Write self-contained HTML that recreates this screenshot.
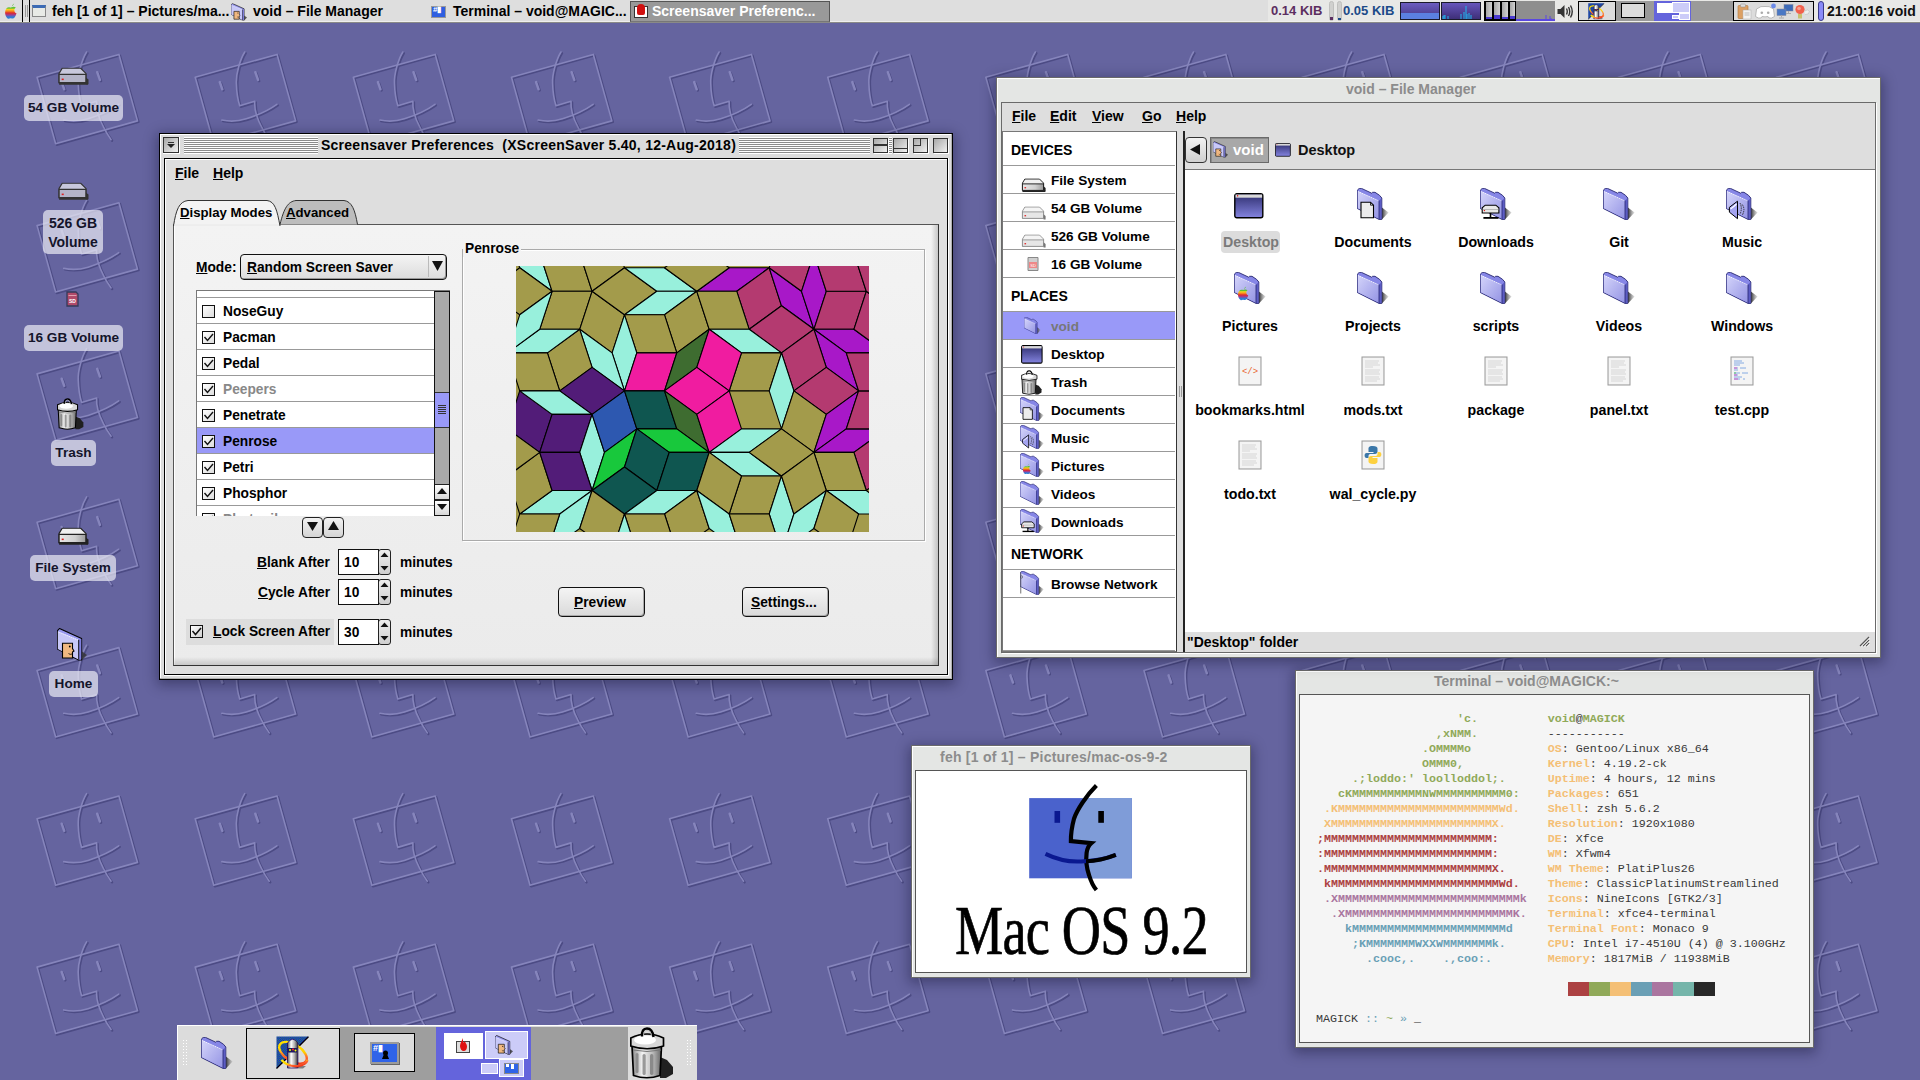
<!DOCTYPE html>
<html><head><meta charset="utf-8">
<style>
*{box-sizing:border-box;margin:0;padding:0}
html,body{width:1920px;height:1080px;overflow:hidden}
body{position:relative;background:#65649f;font-family:"Liberation Sans",sans-serif;font-size:13px;color:#000}
.a{position:absolute}
.b{font-weight:bold}
.t{white-space:nowrap}
#wall{position:absolute;left:0;top:0;width:1920px;height:1080px}
/* panel */
#panel{position:absolute;left:0;top:0;width:1920px;height:23px;background:linear-gradient(90deg,#dedede 0 1268px,#e8e8e6 1268px);border-bottom:1px solid #8a8a88;box-shadow:inset 0 -1px 0 #efefed}
#panel .tx{position:absolute;top:3px;font-size:14px;font-weight:bold;white-space:nowrap;line-height:16px}
/* desktop icons */
.dlab{position:absolute;background:rgba(235,235,245,0.72);border-radius:4px;font-weight:bold;font-size:13.5px;text-align:center;line-height:18px;color:#111}
/* window */
.win{position:absolute}
</style></head><body>
<svg id="wall" width="1920" height="1080">
<defs><g id="face"><g stroke="#4c4b84" stroke-width="2.2" transform="translate(0.9,0.9)"><g transform="rotate(-15.6)" fill="none" stroke-linecap="round" stroke-linejoin="round">
<rect x="0" y="0" width="85" height="69"/>
<path d="M54.5,-11 C48,-5 40,8 38,17 C36,25 35,33 35.2,39.5 L50.9,39.2 C48.5,46 48,54 50.6,66 C51.5,71 53,76 54.5,80"/>
<path d="M14.2,48.4 C22,52.5 30,54 38,53.8 C50,53.3 62,51.5 71.4,48"/>
<path d="M22.4,11.3 L22.9,18.9 M59.3,11.3 L59.8,19.5" stroke-width="2.5"/>
</g></g><g stroke="#8685bc" stroke-width="1.6" transform="translate(-0.2,-0.2)"><g transform="rotate(-15.6)" fill="none" stroke-linecap="round" stroke-linejoin="round">
<rect x="0" y="0" width="85" height="69"/>
<path d="M54.5,-11 C48,-5 40,8 38,17 C36,25 35,33 35.2,39.5 L50.9,39.2 C48.5,46 48,54 50.6,66 C51.5,71 53,76 54.5,80"/>
<path d="M14.2,48.4 C22,52.5 30,54 38,53.8 C50,53.3 62,51.5 71.4,48"/>
<path d="M22.4,11.3 L22.9,18.9 M59.3,11.3 L59.8,19.5" stroke-width="2.5"/>
</g></g></g></defs>
<use href="#face" x="-120.87" y="-70.85"/>
<use href="#face" x="37.26" y="-70.85"/>
<use href="#face" x="195.39" y="-70.85"/>
<use href="#face" x="353.52" y="-70.85"/>
<use href="#face" x="511.65" y="-70.85"/>
<use href="#face" x="669.78" y="-70.85"/>
<use href="#face" x="827.91" y="-70.85"/>
<use href="#face" x="986.04" y="-70.85"/>
<use href="#face" x="1144.17" y="-70.85"/>
<use href="#face" x="1302.30" y="-70.85"/>
<use href="#face" x="1460.43" y="-70.85"/>
<use href="#face" x="1618.56" y="-70.85"/>
<use href="#face" x="1776.69" y="-70.85"/>
<use href="#face" x="-120.87" y="77.46"/>
<use href="#face" x="37.26" y="77.46"/>
<use href="#face" x="195.39" y="77.46"/>
<use href="#face" x="353.52" y="77.46"/>
<use href="#face" x="511.65" y="77.46"/>
<use href="#face" x="669.78" y="77.46"/>
<use href="#face" x="827.91" y="77.46"/>
<use href="#face" x="986.04" y="77.46"/>
<use href="#face" x="1144.17" y="77.46"/>
<use href="#face" x="1302.30" y="77.46"/>
<use href="#face" x="1460.43" y="77.46"/>
<use href="#face" x="1618.56" y="77.46"/>
<use href="#face" x="1776.69" y="77.46"/>
<use href="#face" x="-120.87" y="225.77"/>
<use href="#face" x="37.26" y="225.77"/>
<use href="#face" x="195.39" y="225.77"/>
<use href="#face" x="353.52" y="225.77"/>
<use href="#face" x="511.65" y="225.77"/>
<use href="#face" x="669.78" y="225.77"/>
<use href="#face" x="827.91" y="225.77"/>
<use href="#face" x="986.04" y="225.77"/>
<use href="#face" x="1144.17" y="225.77"/>
<use href="#face" x="1302.30" y="225.77"/>
<use href="#face" x="1460.43" y="225.77"/>
<use href="#face" x="1618.56" y="225.77"/>
<use href="#face" x="1776.69" y="225.77"/>
<use href="#face" x="-120.87" y="374.08"/>
<use href="#face" x="37.26" y="374.08"/>
<use href="#face" x="195.39" y="374.08"/>
<use href="#face" x="353.52" y="374.08"/>
<use href="#face" x="511.65" y="374.08"/>
<use href="#face" x="669.78" y="374.08"/>
<use href="#face" x="827.91" y="374.08"/>
<use href="#face" x="986.04" y="374.08"/>
<use href="#face" x="1144.17" y="374.08"/>
<use href="#face" x="1302.30" y="374.08"/>
<use href="#face" x="1460.43" y="374.08"/>
<use href="#face" x="1618.56" y="374.08"/>
<use href="#face" x="1776.69" y="374.08"/>
<use href="#face" x="-120.87" y="522.39"/>
<use href="#face" x="37.26" y="522.39"/>
<use href="#face" x="195.39" y="522.39"/>
<use href="#face" x="353.52" y="522.39"/>
<use href="#face" x="511.65" y="522.39"/>
<use href="#face" x="669.78" y="522.39"/>
<use href="#face" x="827.91" y="522.39"/>
<use href="#face" x="986.04" y="522.39"/>
<use href="#face" x="1144.17" y="522.39"/>
<use href="#face" x="1302.30" y="522.39"/>
<use href="#face" x="1460.43" y="522.39"/>
<use href="#face" x="1618.56" y="522.39"/>
<use href="#face" x="1776.69" y="522.39"/>
<use href="#face" x="-120.87" y="670.70"/>
<use href="#face" x="37.26" y="670.70"/>
<use href="#face" x="195.39" y="670.70"/>
<use href="#face" x="353.52" y="670.70"/>
<use href="#face" x="511.65" y="670.70"/>
<use href="#face" x="669.78" y="670.70"/>
<use href="#face" x="827.91" y="670.70"/>
<use href="#face" x="986.04" y="670.70"/>
<use href="#face" x="1144.17" y="670.70"/>
<use href="#face" x="1302.30" y="670.70"/>
<use href="#face" x="1460.43" y="670.70"/>
<use href="#face" x="1618.56" y="670.70"/>
<use href="#face" x="1776.69" y="670.70"/>
<use href="#face" x="-120.87" y="819.01"/>
<use href="#face" x="37.26" y="819.01"/>
<use href="#face" x="195.39" y="819.01"/>
<use href="#face" x="353.52" y="819.01"/>
<use href="#face" x="511.65" y="819.01"/>
<use href="#face" x="669.78" y="819.01"/>
<use href="#face" x="827.91" y="819.01"/>
<use href="#face" x="986.04" y="819.01"/>
<use href="#face" x="1144.17" y="819.01"/>
<use href="#face" x="1302.30" y="819.01"/>
<use href="#face" x="1460.43" y="819.01"/>
<use href="#face" x="1618.56" y="819.01"/>
<use href="#face" x="1776.69" y="819.01"/>
<use href="#face" x="-120.87" y="967.32"/>
<use href="#face" x="37.26" y="967.32"/>
<use href="#face" x="195.39" y="967.32"/>
<use href="#face" x="353.52" y="967.32"/>
<use href="#face" x="511.65" y="967.32"/>
<use href="#face" x="669.78" y="967.32"/>
<use href="#face" x="827.91" y="967.32"/>
<use href="#face" x="986.04" y="967.32"/>
<use href="#face" x="1144.17" y="967.32"/>
<use href="#face" x="1302.30" y="967.32"/>
<use href="#face" x="1460.43" y="967.32"/>
<use href="#face" x="1618.56" y="967.32"/>
<use href="#face" x="1776.69" y="967.32"/>
</svg>

<svg width="0" height="0" style="position:absolute">
<defs>
 <linearGradient id="fgrad" x1="0" y1="0" x2="1" y2="1"><stop offset="0" stop-color="#d4d4fa"/><stop offset="1" stop-color="#9494e4"/></linearGradient>
 <linearGradient id="shg" x1="0" y1="0" x2="1" y2="0"><stop offset="0" stop-color="#333"/><stop offset="1" stop-color="#999" stop-opacity="0.3"/></linearGradient>
 <linearGradient id="dwin" x1="0" y1="0" x2="0" y2="1"><stop offset="0" stop-color="#2e2e6e"/><stop offset="1" stop-color="#8484e0"/></linearGradient>
 <linearGradient id="drv" x1="0" y1="0" x2="1" y2="0"><stop offset="0" stop-color="#e8e8e8"/><stop offset="0.6" stop-color="#d0d0d0"/><stop offset="1" stop-color="#9a9a9a"/></linearGradient>
 <linearGradient id="trg" x1="0" y1="0" x2="1" y2="0"><stop offset="0" stop-color="#888"/><stop offset="0.35" stop-color="#f4f4f4"/><stop offset="0.7" stop-color="#bbb"/><stop offset="1" stop-color="#666"/></linearGradient>
 <symbol id="folder" viewBox="0 0 32 32">
  <path d="M24.9,19.5 L31.6,24.4 L24.9,31.6Z" fill="url(#shg)"/>
  <path d="M0.3,2.2 L2.2,0.4 L4.5,0.4 L14.7,5.2 L15.6,4.3 L18,4.3 L22.5,7.3 L24.8,10 L24.8,31.4 L22,31.4 L0.3,20.5Z" fill="#8686e6" stroke="#24246e" stroke-width="0.9" stroke-linejoin="round"/>
  <path d="M0.9,3 L22,12.6 L22,30.8 L0.9,20.2Z" fill="url(#fgrad)"/>
  <path d="M22,12.6 L24.3,10.6 L24.3,30.9 L22,30.9Z" fill="#5c5cc4"/>
  <path d="M22,12.6 V31.2" stroke="#24246e" stroke-width="0.8"/>
  <path d="M1.3,3.6 L21.5,12.8" stroke="#fff" stroke-width="0.8" stroke-dasharray="1.1,0.9"/>
 </symbol>
 <symbol id="dwinico" viewBox="0 0 30 26">
  <rect x="0.8" y="0.8" width="28" height="24" rx="2" fill="url(#dwin)" stroke="#000" stroke-width="1.4"/>
  <rect x="1.5" y="1.5" width="26.6" height="3.2" fill="#d8d8d8"/>
  <rect x="3" y="2.2" width="1.2" height="1.2" fill="#d00"/>
 </symbol>
 <symbol id="drive" viewBox="0 0 32 18">
  <path d="M6,1 L24,1 L29,6 L29,15 L3,15 L3,6Z" fill="#f0f0f0" stroke="#222" stroke-width="1.2"/>
  <path d="M3,7 L29,7 L29,15 L3,15Z" fill="url(#drv)" stroke="#222" stroke-width="1.2"/>
  <path d="M29,10 L31.5,12 L31.5,16.5 L29,16.5Z" fill="#222"/>
  <rect x="3" y="15" width="28" height="2" fill="#222"/>
  <rect x="5.5" y="11" width="2" height="1.5" fill="#d22"/>
 </symbol>
 <symbol id="drivew" viewBox="0 0 32 18">
  <path d="M6,1 L24,1 L29,6 L29,15 L3,15 L3,6Z" fill="#f4f4f4" stroke="#888" stroke-width="1"/>
  <path d="M3,7 L29,7 L29,15 L3,15Z" fill="#e6e6e6" stroke="#888" stroke-width="1"/>
  <path d="M29,10 L31.5,12 L31.5,16.5 L29,16.5Z" fill="#777"/>
  <rect x="5.5" y="11" width="2" height="1.5" fill="#d22"/>
 </symbol>
 <symbol id="drived" viewBox="0 0 32 18">
  <path d="M6,1 L24,1 L29,6 L29,15 L3,15 L3,6Z" fill="#c8c8dc" stroke="#333" stroke-width="1.2"/>
  <path d="M3,7 L29,7 L29,15 L3,15Z" fill="#b4b4c8" stroke="#333" stroke-width="1.2"/>
  <path d="M29,10 L31.5,12 L31.5,16.5 L29,16.5Z" fill="#333"/>
  <rect x="3" y="15" width="28" height="2" fill="#333"/>
  <rect x="5.5" y="11" width="2" height="1.5" fill="#d22"/>
 </symbol>
 <symbol id="trash" viewBox="0 0 44 52">
  <path d="M30,30 L37,33 L43,40 L43,47 L36,51 L30,51Z" fill="#202020"/>
  <path d="M2,19 L31.5,19 L30,48.5 Q17,53 3.5,48.5Z" fill="url(#trg)" stroke="#000" stroke-width="1.7"/>
  <path d="M3,23 Q17,26 31,23" stroke="#777" stroke-width="1" fill="none"/>
  <rect x="5.5" y="26" width="3" height="20" rx="1.5" fill="#8c8c8c"/><rect x="12.5" y="27" width="3.2" height="21" rx="1.6" fill="#999"/><rect x="20" y="27" width="3.4" height="21" rx="1.7" fill="#8a8a8a"/>
  <path d="M0.8,11 Q17,3 33.5,11 L33.5,19 Q17,24.5 0.8,19Z" fill="#d8d8d8" stroke="#000" stroke-width="1.7"/>
  <ellipse cx="15" cy="13" rx="11" ry="4.5" fill="#fff"/>
  <path d="M12,9.5 Q11.5,1.5 17,1.5 Q22.5,1.5 23.5,10" stroke="#000" stroke-width="2.4" fill="none"/>
  <path d="M13.5,9 Q13.5,3.5 17,3.5 Q21,3.5 21.5,9" stroke="#bbb" stroke-width="1" fill="none"/>
 </symbol>
 <symbol id="txtdoc" viewBox="0 0 24 30">
  <rect x="1" y="1" width="22" height="28" fill="#eee" stroke="#999" stroke-width="1"/>
  <rect x="2" y="2" width="20" height="26" fill="#f4f4f4"/>
  <path d="M4,5H18M4,7H17M4,9H19M4,11H12M4,14H19M4,16H18M4,18H19M4,21H18M4,23H19M4,25H16" stroke="#c4c4c4" stroke-width="0.6"/>
 </symbol>
<symbol id="homef" viewBox="0 0 30 33">
  <path d="M24.6,23 L30,27 L24.6,32.5Z" fill="#333" opacity="0.8"/>
  <path d="M0.5,2.7 L2.5,0.5 L24.6,10.5 L24.6,32 L21.7,32 L0.5,21Z" fill="#9a9af0" stroke="#000" stroke-width="1.1" stroke-linejoin="round"/>
  <path d="M0.8,3.2 L21.7,11.8 L21.7,31.5 L0.8,21Z" fill="#c8c8f8"/>
  <path d="M21.7,11.8 L24.3,11 L24.3,31.5 L21.7,31.5Z" fill="#8080e0"/>
  <path d="M1.5,4 L21,12" stroke="#fff" stroke-width="0.9" stroke-dasharray="1.2,1"/>
  <path d="M21.7,11.8 V31.5" stroke="#000" stroke-width="0.9"/>
  <path d="M5.5,15.3 H15.5 V20.5 L17,23 L15.5,24 V30 H5.5Z" fill="#f0b880" stroke="#000" stroke-width="1.1"/>
  <circle cx="12.8" cy="18.5" r="0.9" fill="#000"/>
  <path d="M11.5,25.5 Q13,27 15,26" stroke="#000" stroke-width="0.8" fill="none"/>
 </symbol>
<symbol id="xss" viewBox="0 0 34 34">
  <defs><pattern id="dith" width="2" height="2" patternUnits="userSpaceOnUse"><rect width="2" height="2" fill="#1414e0"/><rect width="1" height="1" fill="#2a8a5a"/><rect x="1" y="1" width="1" height="1" fill="#2a8a5a"/></pattern>
  <linearGradient id="ringg" x1="0" y1="0" x2="1" y2="1"><stop offset="0" stop-color="#ffe800"/><stop offset="0.45" stop-color="#ffd000"/><stop offset="0.6" stop-color="#ff6a30"/><stop offset="1" stop-color="#e82010"/></linearGradient>
  <linearGradient id="cylg" x1="0" y1="0" x2="1" y2="0"><stop offset="0" stop-color="#555"/><stop offset="0.35" stop-color="#fff"/><stop offset="0.7" stop-color="#aaa"/><stop offset="1" stop-color="#333"/></linearGradient></defs>
  <path d="M0.5,0.5 H32.5 L0.5,32.5Z" fill="url(#dith)"/>
  <path d="M32.5,0.8 L0.5,32.5" stroke="#000" stroke-width="1.2"/>
  <path d="M22,30 H30 L27,32.5 H22Z" fill="#808080"/>
  <ellipse cx="17" cy="16.8" rx="15.5" ry="8.3" transform="rotate(33 17 16.8)" fill="none" stroke="url(#ringg)" stroke-width="2.4"/>
  <path d="M11.5,32 V7 Q16.7,-0.5 21.9,7 V32Z" fill="url(#cylg)" stroke="#220a60" stroke-width="0.8"/>
  <rect x="12" y="12" width="9" height="4.5" fill="#1a1a60"/><circle cx="14" cy="14" r="1" fill="#ff0"/><circle cx="17" cy="13.5" r="1.1" fill="#f22"/><circle cx="19.5" cy="14.5" r="1" fill="#ff0"/>
  <path d="M5.5,24 Q12,31 22,30 Q30,28.5 31.5,24" fill="none" stroke="url(#ringg)" stroke-width="2.4"/>
 </symbol>
</defs></svg>

<!-- DESK -->
<svg class="a" style="left:56px;top:67px" width="33" height="19" viewBox="0 0 32 18"><use href="#drived"/></svg>
<div class="a" style="left:24px;top:95px;width:99px;height:26px;background:rgba(232,232,242,0.72);border-radius:5px"></div>
<div class="a t b" style="left:24px;top:99px;width:99px;text-align:center;font-size:13.6px;line-height:18px;color:#14142a">54 GB Volume</div>
<svg class="a" style="left:56px;top:182px" width="33" height="19" viewBox="0 0 32 18"><use href="#drived"/></svg>
<div class="a" style="left:43px;top:210px;width:60px;height:44px;background:rgba(232,232,242,0.72);border-radius:5px"></div>
<div class="a b" style="left:43px;top:214px;width:60px;text-align:center;font-size:14px;line-height:18.5px;color:#14142a">526 GB<br>Volume</div>
<svg class="a" style="left:66px;top:291px" width="13" height="16" viewBox="0 0 13 16"><path d="M1,1H10L12,3V15H1Z" fill="#b04a6a" stroke="#333a5a" stroke-width="1.3"/><rect x="2.5" y="4" width="8" height="1" fill="#e0a0b0"/><text x="6.5" y="12" font-size="5" text-anchor="middle" fill="#fff" font-family="Liberation Sans" font-weight="bold">SD</text></svg>
<div class="a" style="left:24px;top:325px;width:99px;height:26px;background:rgba(232,232,242,0.72);border-radius:5px"></div>
<div class="a t b" style="left:24px;top:329px;width:99px;text-align:center;font-size:13.6px;line-height:18px;color:#14142a">16 GB Volume</div>
<svg class="a" style="left:57px;top:398px" width="27" height="32" viewBox="0 0 44 52"><use href="#trash"/></svg>
<div class="a" style="left:51px;top:440px;width:45px;height:26px;background:rgba(232,232,242,0.72);border-radius:5px"></div>
<div class="a t b" style="left:51px;top:444px;width:45px;text-align:center;font-size:13.6px;line-height:18px;color:#14142a">Trash</div>
<svg class="a" style="left:56px;top:527px" width="33" height="19" viewBox="0 0 32 18"><use href="#drive"/></svg>
<div class="a" style="left:30px;top:555px;width:86px;height:26px;background:rgba(232,232,242,0.72);border-radius:5px"></div>
<div class="a t b" style="left:30px;top:559px;width:86px;text-align:center;font-size:13.6px;line-height:18px;color:#14142a">File System</div>
<svg class="a" style="left:57px;top:628px" width="30" height="33" viewBox="0 0 30 33"><use href="#homef"/></svg>
<div class="a" style="left:49px;top:671px;width:49px;height:26px;background:rgba(232,232,242,0.72);border-radius:5px"></div>
<div class="a t b" style="left:49px;top:675px;width:49px;text-align:center;font-size:13.6px;line-height:18px;color:#14142a">Home</div>
<div class="a" style="left:177px;top:1025px;width:520px;height:55px;background:#dcdcdc;border-top:1px solid #fff;border-left:1px solid #fff"></div>
<div class="a" style="left:182px;top:1039px;width:6px;height:26px;background:radial-gradient(circle,#fff 0.8px,transparent 1px) 0 0/3px 3px"></div>
<div class="a" style="left:686px;top:1039px;width:6px;height:26px;background:radial-gradient(circle,#fff 0.8px,transparent 1px) 0 0/3px 3px"></div>
<svg class="a" style="left:201px;top:1037px" width="32" height="32" viewBox="0 0 32 32"><use href="#folder"/></svg>
<div class="a" style="left:246px;top:1028px;width:94px;height:51px;border:1.5px solid #000;background:#dcdcdc"></div>
<svg class="a" style="left:276px;top:1036px" width="34" height="34" viewBox="0 0 34 34"><use href="#xss"/></svg>
<div class="a" style="left:340px;top:1027px;width:96px;height:53px;background:#9e9e9e"></div>
<div class="a" style="left:354px;top:1033px;width:61px;height:39px;border:1.5px solid #000;background:#dcdcdc"></div>
<div class="a" style="left:370px;top:1042px;width:29px;height:22px;background:#2f63e8;border:2px solid #9a9a9a;box-shadow:1px 1px 0 #666"></div>
<div class="a t b" style="left:373px;top:1043px;font-size:9px;line-height:10px;color:#fff">#▮</div>
<svg class="a" style="left:381px;top:1050px" width="9" height="10"><circle cx="4.5" cy="3" r="2.5" fill="#000"/><path d="M3,4 L1,9 H8 L6,4Z" fill="#000"/></svg>
<div class="a" style="left:436px;top:1027px;width:95px;height:53px;background:#6464dc"></div>
<div class="a" style="left:444px;top:1033px;width:39px;height:26px;background:#fff"></div>
<div class="a" style="left:456px;top:1041px;width:14px;height:12px;background:#ddd;border:1px solid #444"></div>
<svg class="a" style="left:457px;top:1037px" width="12" height="16"><path d="M6,1 C5,4 3,6 3,9 C3,12 5,14 6.5,14 C9,14 10,12 10,9.5 C10,7 8,6 8,4 C7,5 7,6 6,5 C6,3 6,2 6,1Z" fill="#e01010"/></svg>
<div class="a" style="left:485px;top:1031px;width:43px;height:28px;background:#ccccf8;border:1px solid #fff"></div>
<svg class="a" style="left:495px;top:1035px" width="18" height="20" viewBox="0 0 30 33"><use href="#homef"/></svg>
<div class="a" style="left:481px;top:1063px;width:17px;height:11px;background:#ccccf8;border:1px solid #fff"></div>
<div class="a" style="left:499px;top:1059px;width:25px;height:18px;background:#ccccf8;border:1px solid #fff"></div>
<div class="a" style="left:504px;top:1063px;width:15px;height:11px;background:#2f63e8;border:1px solid #888"></div><div class="a" style="left:506px;top:1064px;width:3px;height:3px;background:#fff"></div><div class="a" style="left:511px;top:1064px;width:3px;height:5px;background:#fff"></div>
<div class="a" style="left:531px;top:1027px;width:97px;height:53px;background:#9e9e9e"></div>
<svg class="a" style="left:630px;top:1027px" width="44" height="52" viewBox="0 0 44 52"><use href="#trash"/></svg>
<!-- FEH/TERM -->
<div class="a" style="left:911px;top:745px;width:340px;height:233px;box-shadow:0 3px 12px 2px rgba(10,10,40,0.38)"></div>
<div class="a" style="left:911px;top:745px;width:340px;height:233px;background:#e4e6e4;border:1px solid #6a6a6a"></div>
<div class="a" style="left:912px;top:746px;width:338px;height:1px;background:#fff"></div>
<div class="a" style="left:912px;top:746px;width:1px;height:231px;background:#fff"></div>
<div class="a t b" style="left:940px;top:749px;font-size:14px;line-height:17px;color:#8c8c8c;letter-spacing:0.24px">feh [1 of 1] – Pictures/mac-os-9-2</div>
<div class="a" style="left:915px;top:770px;width:332px;height:203px;background:#fff;border:1px solid #555"></div>
<svg class="a" style="left:1020px;top:780px" width="120" height="112" viewBox="0 0 120 112">
 <defs><clipPath id="frc"><rect x="9.2" y="18.1" width="102.6" height="80.2"/></clipPath></defs>
 <rect x="9.2" y="18.1" width="102.6" height="80.2" fill="#4a62cc"/>
 <path clip-path="url(#frc)" d="M76.4,5.6 H120 V112 H76.4 C73,106 70.5,100 69,95 C66.6,88 65.8,80 66.6,73 C67,70 68,66 71.3,63.2 L50.9,61.1 C50.8,55 51.5,48 54,38.7 C57,30 66,16 76.4,5.6Z" fill="#7f9cd8"/>
 <path d="M76.4,5.6 C66,16 57,30 54,38.7 C51.5,48 50.8,55 50.9,61.1 L71.3,63.2 C68,66 67,70 66.6,73 C65.8,80 66.6,88 69,95 C70.5,100 73,106 76.4,110" fill="none" stroke="#000" stroke-width="4.2"/>
 <rect x="34.5" y="31" width="5.6" height="11.8" fill="#0a1890"/>
 <rect x="78.3" y="31" width="5.6" height="11.8" fill="#000"/>
 <path d="M25.5,73.9 C38,80 52,82 61.1,81.5 C75,81 88,78 95.8,74.9" fill="none" stroke="#0a1890" stroke-width="4"/>
 <path d="M66,81.2 C75,81 88,78 95.8,74.9" fill="none" stroke="#000" stroke-width="4"/>
</svg>
<div class="a t" style="left:955px;top:896px;font-family:'Liberation Serif',serif;font-size:70px;line-height:70px;color:#000;transform-origin:0 0;transform:scaleX(0.775);letter-spacing:-1px;-webkit-text-stroke:0.7px #000">Mac OS 9.2</div>
<div class="a" style="left:1295px;top:670px;width:519px;height:378px;box-shadow:0 3px 12px 2px rgba(10,10,40,0.38)"></div>
<div class="a" style="left:1295px;top:670px;width:519px;height:378px;background:#e4e6e4;border:1px solid #6a6a6a"></div>
<div class="a" style="left:1296px;top:671px;width:517px;height:1px;background:#fff"></div>
<div class="a" style="left:1296px;top:671px;width:1px;height:376px;background:#fff"></div>
<div class="a t b" style="left:1434px;top:673px;font-size:14px;line-height:17px;color:#8c8c8c">Terminal – void@MAGICK:~</div>
<div class="a" style="left:1299px;top:694px;width:511px;height:349px;background:#f5f5f5;border:1px solid #555"></div>
<div class="a" style="left:1317px;top:712px;font-family:'Liberation Mono',monospace;font-size:11.67px;line-height:15px;white-space:pre"><span style="font-weight:bold;color:#90a959">                    'c.</span>          <span style="font-weight:bold;color:#90a959">void</span><span style="color:#383838">@</span><span style="font-weight:bold;color:#90a959">MAGICK</span>
<span style="font-weight:bold;color:#90a959">                 ,xNMM.</span>          <span style="color:#383838">-----------</span>
<span style="font-weight:bold;color:#90a959">               .OMMMMo</span>           <span style="font-weight:bold;color:#f4bf75">OS</span><span style="color:#383838">: Gentoo/Linux x86_64</span>
<span style="font-weight:bold;color:#90a959">               OMMM0,</span>            <span style="font-weight:bold;color:#f4bf75">Kernel</span><span style="color:#383838">: 4.19.2-ck</span>
<span style="font-weight:bold;color:#90a959">     .;loddo:' loolloddol;.</span>      <span style="font-weight:bold;color:#f4bf75">Uptime</span><span style="color:#383838">: 4 hours, 12 mins</span>
<span style="font-weight:bold;color:#90a959">   cKMMMMMMMMMMNWMMMMMMMMMM0:</span>    <span style="font-weight:bold;color:#f4bf75">Packages</span><span style="color:#383838">: 651</span>
<span style="font-weight:bold;color:#f4bf75"> .KMMMMMMMMMMMMMMMMMMMMMMMWd.</span>    <span style="font-weight:bold;color:#f4bf75">Shell</span><span style="color:#383838">: zsh 5.6.2</span>
<span style="font-weight:bold;color:#f4bf75"> XMMMMMMMMMMMMMMMMMMMMMMMX.</span>      <span style="font-weight:bold;color:#f4bf75">Resolution</span><span style="color:#383838">: 1920x1080</span>
<span style="font-weight:bold;color:#ac4142">;MMMMMMMMMMMMMMMMMMMMMMMM:</span>       <span style="font-weight:bold;color:#f4bf75">DE</span><span style="color:#383838">: Xfce</span>
<span style="font-weight:bold;color:#ac4142">:MMMMMMMMMMMMMMMMMMMMMMMM:</span>       <span style="font-weight:bold;color:#f4bf75">WM</span><span style="color:#383838">: Xfwm4</span>
<span style="font-weight:bold;color:#ac4142">.MMMMMMMMMMMMMMMMMMMMMMMMX.</span>      <span style="font-weight:bold;color:#f4bf75">WM Theme</span><span style="color:#383838">: PlatiPlus26</span>
<span style="font-weight:bold;color:#ac4142"> kMMMMMMMMMMMMMMMMMMMMMMMMWd.</span>    <span style="font-weight:bold;color:#f4bf75">Theme</span><span style="color:#383838">: ClassicPlatinumStreamlined</span>
<span style="font-weight:bold;color:#aa759f"> .XMMMMMMMMMMMMMMMMMMMMMMMMMMk</span>   <span style="font-weight:bold;color:#f4bf75">Icons</span><span style="color:#383838">: NineIcons [GTK2/3]</span>
<span style="font-weight:bold;color:#aa759f">  .XMMMMMMMMMMMMMMMMMMMMMMMMK.</span>   <span style="font-weight:bold;color:#f4bf75">Terminal</span><span style="color:#383838">: xfce4-terminal</span>
<span style="font-weight:bold;color:#6a9fb5">    kMMMMMMMMMMMMMMMMMMMMMMd</span>     <span style="font-weight:bold;color:#f4bf75">Terminal Font</span><span style="color:#383838">: Monaco 9</span>
<span style="font-weight:bold;color:#6a9fb5">     ;KMMMMMMMWXXWMMMMMMMk.</span>      <span style="font-weight:bold;color:#f4bf75">CPU</span><span style="color:#383838">: Intel i7-4510U (4) @ 3.100GHz</span>
<span style="font-weight:bold;color:#6a9fb5">       .cooc,.    .,coo:.</span>        <span style="font-weight:bold;color:#f4bf75">Memory</span><span style="color:#383838">: 1817MiB / 11938MiB</span>
</div>
<div class="a" style="left:1568px;top:982px;width:21px;height:14px;background:#ac4142"></div>
<div class="a" style="left:1589px;top:982px;width:21px;height:14px;background:#90a959"></div>
<div class="a" style="left:1610px;top:982px;width:21px;height:14px;background:#f4bf75"></div>
<div class="a" style="left:1631px;top:982px;width:21px;height:14px;background:#6a9fb5"></div>
<div class="a" style="left:1652px;top:982px;width:21px;height:14px;background:#aa759f"></div>
<div class="a" style="left:1673px;top:982px;width:21px;height:14px;background:#75b5aa"></div>
<div class="a" style="left:1694px;top:982px;width:21px;height:14px;background:#282828"></div>
<div class="a t" style="left:1316px;top:1012px;font-family:'Liberation Mono',monospace;font-size:11.67px;line-height:15px;white-space:pre;color:#383838">MAGICK <span style="color:#6a9fb5">::</span> <span style="color:#90a959">~</span> <span style="color:#6a9fb5">»</span> _</div>
<!-- FM -->
<div class="a" style="left:996px;top:77px;width:885px;height:581px;box-shadow:0 3px 12px 2px rgba(10,10,40,0.38)"></div>
<div class="a" style="left:996px;top:77px;width:885px;height:581px;background:#e4e6e4;border:1px solid #6a6a6a"></div>
<div class="a" style="left:997px;top:78px;width:883px;height:1px;background:#fff"></div>
<div class="a" style="left:997px;top:78px;width:1px;height:579px;background:#fff"></div>
<div class="a t b" style="left:1346px;top:81px;font-size:14px;line-height:17px;color:#8c8c8c">void – File Manager</div>
<div class="a" style="left:1001px;top:102px;width:875px;height:551px;background:#dedede;border:1px solid #6a6a6a"></div>
<div class="a" style="left:1876px;top:103px;width:1px;height:551px;background:#fff"></div>
<div class="a" style="left:1002px;top:653px;width:875px;height:1px;background:#fff"></div>
<div class="a t b" style="left:1012px;top:108px;font-size:14px;line-height:17px"><u>F</u>ile</div>
<div class="a t b" style="left:1050px;top:108px;font-size:14px;line-height:17px"><u>E</u>dit</div>
<div class="a t b" style="left:1092px;top:108px;font-size:14px;line-height:17px"><u>V</u>iew</div>
<div class="a t b" style="left:1142px;top:108px;font-size:14px;line-height:17px"><u>G</u>o</div>
<div class="a t b" style="left:1176px;top:108px;font-size:14px;line-height:17px"><u>H</u>elp</div>
<div class="a" style="left:1002px;top:131px;width:175px;height:521px;background:#fff;border:1px solid #777;border-right:1px solid #333"></div>
<div class="a" style="left:1003px;top:311px;width:172px;height:28px;background:#9999f8"></div>
<div class="a" style="left:1003px;top:165px;width:172px;height:1px;background:#999"></div>
<div class="a" style="left:1003px;top:193px;width:172px;height:1px;background:#999"></div>
<div class="a" style="left:1003px;top:221px;width:172px;height:1px;background:#999"></div>
<div class="a" style="left:1003px;top:249px;width:172px;height:1px;background:#999"></div>
<div class="a" style="left:1003px;top:277px;width:172px;height:1px;background:#999"></div>
<div class="a" style="left:1003px;top:311px;width:172px;height:1px;background:#999"></div>
<div class="a" style="left:1003px;top:339px;width:172px;height:1px;background:#999"></div>
<div class="a" style="left:1003px;top:367px;width:172px;height:1px;background:#999"></div>
<div class="a" style="left:1003px;top:395px;width:172px;height:1px;background:#999"></div>
<div class="a" style="left:1003px;top:423px;width:172px;height:1px;background:#999"></div>
<div class="a" style="left:1003px;top:451px;width:172px;height:1px;background:#999"></div>
<div class="a" style="left:1003px;top:479px;width:172px;height:1px;background:#999"></div>
<div class="a" style="left:1003px;top:507px;width:172px;height:1px;background:#999"></div>
<div class="a" style="left:1003px;top:535px;width:172px;height:1px;background:#999"></div>
<div class="a" style="left:1003px;top:569px;width:172px;height:1px;background:#999"></div>
<div class="a" style="left:1003px;top:597px;width:172px;height:1px;background:#999"></div>
<div class="a" style="left:1003px;top:650px;width:172px;height:1px;background:#999"></div>
<div class="a t b" style="left:1011px;top:142px;font-size:14px;line-height:16px">DEVICES</div>
<div class="a t b" style="left:1011px;top:288px;font-size:14px;line-height:16px">PLACES</div>
<div class="a t b" style="left:1011px;top:546px;font-size:14px;line-height:16px">NETWORK</div>
<div class="a t b" style="left:1051px;top:173px;font-size:13.6px;line-height:16px;color:#000">File System</div>
<svg class="a" style="left:1020px;top:178px" width="26" height="15" viewBox="0 0 32 18"><use href="#drive"/></svg>
<div class="a t b" style="left:1051px;top:201px;font-size:13.6px;line-height:16px;color:#000">54 GB Volume</div>
<svg class="a" style="left:1020px;top:206px" width="26" height="15" viewBox="0 0 32 18"><use href="#drivew"/></svg>
<div class="a t b" style="left:1051px;top:229px;font-size:13.6px;line-height:16px;color:#000">526 GB Volume</div>
<svg class="a" style="left:1020px;top:234px" width="26" height="15" viewBox="0 0 32 18"><use href="#drivew"/></svg>
<div class="a t b" style="left:1051px;top:257px;font-size:13.6px;line-height:16px;color:#000">16 GB Volume</div>
<svg class="a" style="left:1027px;top:257px" width="12" height="14" viewBox="0 0 12 14"><path d="M1,0.5H11V13.5H1Z" fill="#cfcfcf" stroke="#888"/><rect x="2" y="5" width="8" height="6" fill="#e88"/><text x="6" y="10" font-size="4" text-anchor="middle" fill="#fff" font-family="Liberation Sans">SD</text></svg>
<div class="a t b" style="left:1051px;top:319px;font-size:13.6px;line-height:16px;color:#777">void</div>
<svg class="a" style="left:1024px;top:317px" width="17" height="17" viewBox="0 0 32 32"><use href="#folder"/></svg>
<div class="a t b" style="left:1051px;top:347px;font-size:13.6px;line-height:16px;color:#000">Desktop</div>
<svg class="a" style="left:1021px;top:345px" width="22" height="19" viewBox="0 0 30 26"><use href="#dwinico"/></svg>
<div class="a t b" style="left:1051px;top:375px;font-size:13.6px;line-height:16px;color:#000">Trash</div>
<svg class="a" style="left:1021px;top:370px" width="21" height="25" viewBox="0 0 44 52"><use href="#trash"/></svg>
<div class="a t b" style="left:1051px;top:403px;font-size:13.6px;line-height:16px;color:#000">Documents</div>
<svg class="a" style="left:1020px;top:397px" width="24" height="24" viewBox="0 0 32 32"><use href="#folder"/><path d="M4,14.2 H13.5 L16.5,17.2 V29.8 H4Z" fill="#ececec" stroke="#000" stroke-width="1.1"/><path d="M13.5,14.2 V17.2 H16.5" fill="none" stroke="#000" stroke-width="0.8"/></svg>
<div class="a t b" style="left:1051px;top:431px;font-size:13.6px;line-height:16px;color:#000">Music</div>
<svg class="a" style="left:1020px;top:425px" width="24" height="24" viewBox="0 0 32 32"><use href="#folder"/><path d="M11.5,13.2 L3.4,19.3 L3.4,24.2 L11.5,30.7Z" fill="#a4a4f0" stroke="#000" stroke-width="1"/><path d="M4.5,21 Q8,18.5 10.5,16" stroke="#fff" stroke-width="1.2" fill="none"/><path d="M14,15 Q16.5,20 14.2,25.8 M16.2,16.5 Q19.5,21 16.4,27" fill="none" stroke="#222" stroke-width="0.9" stroke-dasharray="1.5,0.8"/></svg>
<div class="a t b" style="left:1051px;top:459px;font-size:13.6px;line-height:16px;color:#000">Pictures</div>
<svg class="a" style="left:1020px;top:453px" width="24" height="24" viewBox="0 0 32 32"><use href="#folder"/><g transform="translate(3,14) scale(0.9)"><path d="M10.3,0.6 C9.6,1.8 9,2.6 7.8,3.4 C8.3,2.2 9,1.2 10.3,0.6Z M7.6,4.3 C9,3.6 10.6,3.6 11.8,4.6 C10.6,5.4 10.2,6.4 10.4,7.8 C10.6,9.2 11.4,9.9 12.5,10.3 C12,12.2 10.6,15.4 9,15.6 C8,15.7 7.6,15.1 6.6,15.2 C5.6,15.3 5.2,15.9 4.3,15.7 C2.7,15.3 1,12.3 1.1,9.3 C1.2,6 3.2,4.1 5.2,4.2 C6.3,4.2 6.8,4.7 7.6,4.3Z" fill="url(#appleg)"/></g></svg>
<div class="a t b" style="left:1051px;top:487px;font-size:13.6px;line-height:16px;color:#000">Videos</div>
<svg class="a" style="left:1020px;top:481px" width="24" height="24" viewBox="0 0 32 32"><use href="#folder"/></svg>
<div class="a t b" style="left:1051px;top:515px;font-size:13.6px;line-height:16px;color:#000">Downloads</div>
<svg class="a" style="left:1020px;top:509px" width="24" height="24" viewBox="0 0 32 32"><use href="#folder"/><path d="M5.2,17.2 H15.8 L18.9,19.8 V25 H2.2 V19.8Z" fill="#e8e8e8" stroke="#000" stroke-width="1.1"/><path d="M2.7,21.5 H18.4" stroke="#aaa" stroke-width="0.8"/><circle cx="4.4" cy="22.6" r="0.7" fill="#e00"/><path d="M10.5,25 V29.5" stroke="#000" stroke-width="1.6"/><path d="M3.4,29.9 H18.5" stroke="#000" stroke-width="1.8"/></svg>
<div class="a t b" style="left:1051px;top:577px;font-size:13.6px;line-height:16px;color:#000">Browse Network</div>
<svg class="a" style="left:1020px;top:571px" width="24" height="24" viewBox="0 0 32 32"><use href="#folder"/><path d="M1,2 V30" stroke="#444" stroke-width="1"/><circle cx="2" cy="8" r="1.6" fill="none" stroke="#444" stroke-width="0.7"/></svg>
<div class="a" style="left:1177px;top:131px;width:6px;height:521px;background:#dedede"></div>
<div class="a" style="left:1179px;top:386px;width:1px;height:11px;background:#999"></div>
<div class="a" style="left:1181px;top:386px;width:1px;height:11px;background:#999"></div>
<div class="a" style="left:1183px;top:131px;width:2px;height:521px;background:#222"></div>
<div class="a" style="left:1185px;top:169px;width:690px;height:463px;background:#fff;border-top:1px solid #777"></div>
<div class="a" style="left:1185px;top:137px;width:22px;height:26px;border:1px solid #333;border-radius:4px;background:linear-gradient(#f2f2f2,#d0d0d0)"></div>
<svg class="a" style="left:1190px;top:144px" width="11" height="12"><path d="M10,0 V11 L0,5.5Z" fill="#111"/></svg>
<div class="a" style="left:1210px;top:137px;width:59px;height:26px;border:1px solid #6a6a6a;background:#a8a8a8;box-shadow:inset 1px 1px 0 #8a8a8a"></div>
<svg class="a" style="left:1213px;top:141px" width="15" height="17" viewBox="0 0 30 33"><use href="#homef"/></svg>
<div class="a t b" style="left:1233px;top:141px;font-size:15px;line-height:18px;color:#fff">void</div>
<svg class="a" style="left:1275px;top:143px" width="16" height="14" viewBox="0 0 30 26"><use href="#dwinico"/></svg>
<div class="a t b" style="left:1298px;top:141px;font-size:14.5px;line-height:18px;color:#111">Desktop</div>
<div class="a" style="left:1221px;top:231px;width:59px;height:22px;background:#dcdcdc;border-radius:4px"></div>
<div class="a t b" style="left:1223px;top:234px;width:55px;text-align:center;font-size:14.2px;line-height:17px;color:#7a7a7a">Desktop</div>
<svg class="a" style="left:1234px;top:193px" width="30" height="26" viewBox="0 0 30 26"><use href="#dwinico"/></svg>
<div class="a t b" style="left:1293px;top:234px;width:160px;text-align:center;font-size:14.2px;line-height:17px">Documents</div>
<svg class="a" style="left:1357px;top:188px" width="32" height="32" viewBox="0 0 32 32"><use href="#folder"/><path d="M4,14.2 H13.5 L16.5,17.2 V29.8 H4Z" fill="#ececec" stroke="#000" stroke-width="1.1"/><path d="M13.5,14.2 V17.2 H16.5" fill="none" stroke="#000" stroke-width="0.8"/></svg>
<div class="a t b" style="left:1416px;top:234px;width:160px;text-align:center;font-size:14.2px;line-height:17px">Downloads</div>
<svg class="a" style="left:1480px;top:188px" width="32" height="32" viewBox="0 0 32 32"><use href="#folder"/><path d="M5.2,17.2 H15.8 L18.9,19.8 V25 H2.2 V19.8Z" fill="#e8e8e8" stroke="#000" stroke-width="1.1"/><path d="M2.7,21.5 H18.4" stroke="#aaa" stroke-width="0.8"/><circle cx="4.4" cy="22.6" r="0.7" fill="#e00"/><path d="M10.5,25 V29.5" stroke="#000" stroke-width="1.6"/><path d="M3.4,29.9 H18.5" stroke="#000" stroke-width="1.8"/></svg>
<div class="a t b" style="left:1539px;top:234px;width:160px;text-align:center;font-size:14.2px;line-height:17px">Git</div>
<svg class="a" style="left:1603px;top:188px" width="32" height="32" viewBox="0 0 32 32"><use href="#folder"/></svg>
<div class="a t b" style="left:1662px;top:234px;width:160px;text-align:center;font-size:14.2px;line-height:17px">Music</div>
<svg class="a" style="left:1726px;top:188px" width="32" height="32" viewBox="0 0 32 32"><use href="#folder"/><path d="M11.5,13.2 L3.4,19.3 L3.4,24.2 L11.5,30.7Z" fill="#a4a4f0" stroke="#000" stroke-width="1"/><path d="M4.5,21 Q8,18.5 10.5,16" stroke="#fff" stroke-width="1.2" fill="none"/><path d="M14,15 Q16.5,20 14.2,25.8 M16.2,16.5 Q19.5,21 16.4,27" fill="none" stroke="#222" stroke-width="0.9" stroke-dasharray="1.5,0.8"/></svg>
<div class="a t b" style="left:1170px;top:318px;width:160px;text-align:center;font-size:14.2px;line-height:17px">Pictures</div>
<svg class="a" style="left:1234px;top:272px" width="32" height="32" viewBox="0 0 32 32"><use href="#folder"/><g transform="translate(3,14) scale(0.9)"><path d="M10.3,0.6 C9.6,1.8 9,2.6 7.8,3.4 C8.3,2.2 9,1.2 10.3,0.6Z M7.6,4.3 C9,3.6 10.6,3.6 11.8,4.6 C10.6,5.4 10.2,6.4 10.4,7.8 C10.6,9.2 11.4,9.9 12.5,10.3 C12,12.2 10.6,15.4 9,15.6 C8,15.7 7.6,15.1 6.6,15.2 C5.6,15.3 5.2,15.9 4.3,15.7 C2.7,15.3 1,12.3 1.1,9.3 C1.2,6 3.2,4.1 5.2,4.2 C6.3,4.2 6.8,4.7 7.6,4.3Z" fill="url(#appleg)"/></g></svg>
<div class="a t b" style="left:1293px;top:318px;width:160px;text-align:center;font-size:14.2px;line-height:17px">Projects</div>
<svg class="a" style="left:1357px;top:272px" width="32" height="32" viewBox="0 0 32 32"><use href="#folder"/></svg>
<div class="a t b" style="left:1416px;top:318px;width:160px;text-align:center;font-size:14.2px;line-height:17px">scripts</div>
<svg class="a" style="left:1480px;top:272px" width="32" height="32" viewBox="0 0 32 32"><use href="#folder"/></svg>
<div class="a t b" style="left:1539px;top:318px;width:160px;text-align:center;font-size:14.2px;line-height:17px">Videos</div>
<svg class="a" style="left:1603px;top:272px" width="32" height="32" viewBox="0 0 32 32"><use href="#folder"/></svg>
<div class="a t b" style="left:1662px;top:318px;width:160px;text-align:center;font-size:14.2px;line-height:17px">Windows</div>
<svg class="a" style="left:1726px;top:272px" width="32" height="32" viewBox="0 0 32 32"><use href="#folder"/></svg>
<div class="a t b" style="left:1170px;top:402px;width:160px;text-align:center;font-size:14.2px;line-height:17px">bookmarks.html</div>
<svg class="a" style="left:1238px;top:356px" width="24" height="30" viewBox="0 0 24 30"><use href="#txtdoc"/><rect x="2" y="2" width="20" height="26" fill="#f4f4f4"/><text x="12" y="18" font-size="9" text-anchor="middle" fill="#e8622c" font-family="Liberation Mono">&lt;/&gt;</text></svg>
<div class="a t b" style="left:1293px;top:402px;width:160px;text-align:center;font-size:14.2px;line-height:17px">mods.txt</div>
<svg class="a" style="left:1361px;top:356px" width="24" height="30" viewBox="0 0 24 30"><use href="#txtdoc"/></svg>
<div class="a t b" style="left:1416px;top:402px;width:160px;text-align:center;font-size:14.2px;line-height:17px">package</div>
<svg class="a" style="left:1484px;top:356px" width="24" height="30" viewBox="0 0 24 30"><use href="#txtdoc"/></svg>
<div class="a t b" style="left:1539px;top:402px;width:160px;text-align:center;font-size:14.2px;line-height:17px">panel.txt</div>
<svg class="a" style="left:1607px;top:356px" width="24" height="30" viewBox="0 0 24 30"><use href="#txtdoc"/></svg>
<div class="a t b" style="left:1662px;top:402px;width:160px;text-align:center;font-size:14.2px;line-height:17px">test.cpp</div>
<svg class="a" style="left:1730px;top:356px" width="24" height="30" viewBox="0 0 24 30"><use href="#txtdoc"/><rect x="2" y="2" width="20" height="26" fill="#f4f4f4"/><path d="M4,5H12M4,7H14M4,9H10M4,12H8M10,12H16M4,14H8M4,17H10M12,17H18M4,19H8M4,21H12M4,23H10M13,23H15" stroke="#6a9ae0" stroke-width="0.8"/><path d="M4,12H7M4,19H7M4,23H8" stroke="#d040c0" stroke-width="0.8"/><path d="M4,17H6" stroke="#40c040" stroke-width="0.8"/></svg>
<div class="a t b" style="left:1170px;top:486px;width:160px;text-align:center;font-size:14.2px;line-height:17px">todo.txt</div>
<svg class="a" style="left:1238px;top:440px" width="24" height="30" viewBox="0 0 24 30"><use href="#txtdoc"/></svg>
<div class="a t b" style="left:1293px;top:486px;width:160px;text-align:center;font-size:14.2px;line-height:17px">wal_cycle.py</div>
<svg class="a" style="left:1361px;top:440px" width="24" height="30" viewBox="0 0 24 30"><use href="#txtdoc"/><rect x="2" y="2" width="20" height="26" fill="#f4f4f4"/><path d="M12,6 C7,6 7.5,8 7.5,10 V12 H12.5 V13 H5.5 C3,13 3,18 5.5,18 H7.5 V16 C7.5,14.5 8.5,14 10,14 H14 C15.5,14 16.5,13 16.5,11.5 V8.5 C16.5,7 15,6 12,6Z" fill="#3b77a8"/><path d="M12,24 C17,24 16.5,22 16.5,20 V18 H11.5 V17 H18.5 C21,17 21,12 18.5,12 H16.5 V14 C16.5,15.5 15.5,16 14,16 H10 C8.5,16 7.5,17 7.5,18.5 V21.5 C7.5,23 9,24 12,24Z" fill="#fdd13f"/></svg>
<div class="a t b" style="left:1187px;top:634px;font-size:14px;line-height:16px">"Desktop" folder</div>
<svg class="a" style="left:1857px;top:634px" width="14" height="14"><path d="M3,12 L12,3 M6,12 L12,6 M9,12 L12,9" stroke="#555" stroke-width="1.2"/><path d="M4,12.8 L12.8,4 M7,12.8 L12.8,7 M10,12.8 L12.8,10" stroke="#fff" stroke-width="0.8"/></svg>
<div id="panel">
 <svg class="a" style="left:4px;top:3px" width="15" height="17" viewBox="0 0 15 17">
  <defs><linearGradient id="appleg" x1="0" y1="0" x2="0" y2="1">
   <stop offset="0" stop-color="#5ec13a"/><stop offset="0.3" stop-color="#5ec13a"/><stop offset="0.38" stop-color="#f9d21c"/><stop offset="0.5" stop-color="#f68a1f"/><stop offset="0.62" stop-color="#e0282d"/><stop offset="0.75" stop-color="#9c3f96"/><stop offset="0.88" stop-color="#2f7ed6"/><stop offset="1" stop-color="#2f7ed6"/></linearGradient></defs>
  <path d="M10.3,0.6 C9.6,1.8 9,2.6 7.8,3.4 C8.3,2.2 9,1.2 10.3,0.6Z M7.6,4.3 C9,3.6 10.6,3.6 11.8,4.6 C10.6,5.4 10.2,6.4 10.4,7.8 C10.6,9.2 11.4,9.9 12.5,10.3 C12,12.2 10.6,15.4 9,15.6 C8,15.7 7.6,15.1 6.6,15.2 C5.6,15.3 5.2,15.9 4.3,15.7 C2.7,15.3 1,12.3 1.1,9.3 C1.2,6 3.2,4.1 5.2,4.2 C6.3,4.2 6.8,4.7 7.6,4.3Z" fill="url(#appleg)"/>
 </svg>
 <div class="a" style="left:22px;top:0;width:1px;height:22px;background:#000"></div>
 <div class="a" style="left:25px;top:5px;width:1px;height:12px;background:#999"></div>
 <div class="a" style="left:27px;top:5px;width:1px;height:12px;background:#999"></div>
 <div class="a" style="left:29px;top:0;width:1px;height:22px;background:#000"></div>
 <!-- task 1 -->
 <div class="a" style="left:32px;top:5px;width:14px;height:12px;border:1px solid #888;background:#e8eae6;border-top:3px solid #3c6bb5"></div>
 <div class="tx" style="left:52px">feh [1 of 1] – Pictures/ma...</div>
 <!-- task 2 folder icon -->
 <svg class="a" style="left:231px;top:3px" width="16" height="18" viewBox="0 0 30 33"><use href="#homef"/></svg>
 <div class="tx" style="left:253px">void – File Manager</div>
 <!-- task 3 terminal icon -->
 <div class="a" style="left:431px;top:6px;width:15px;height:12px;background:#2f5fe0;border:1px solid #999"></div>
 <div class="a t" style="left:433px;top:5px;font-size:8px;color:#fff;font-weight:bold">#▮</div>
 <div class="tx" style="left:453px">Terminal – void@MAGIC...</div>
 <!-- task 4 active -->
 <div class="a" style="left:630px;top:1px;width:200px;height:21px;background:#999;border:1px solid #555;border-bottom-color:#777"></div>
 <div class="a" style="left:634px;top:6px;width:14px;height:12px;background:#fff;border:1px solid #333"></div>
 <div class="a" style="left:637px;top:4px;width:8px;height:11px;background:#d01010;border-radius:4px 4px 2px 2px"></div>
 <div class="tx" style="left:652px;color:#fff">Screensaver Preferenc...</div>

 <!-- right side -->
 
 <div class="tx" style="left:1271px;font-size:13px;color:#5c2e60">0.14 KIB</div>
 <div class="a" style="left:1329px;top:1px;width:5px;height:20px;background:#d0d0ce;border-radius:3px;border:1px solid #c0c0be"></div>
 <div class="a" style="left:1330px;top:17px;width:3px;height:3px;background:#5c2e60"></div>
 <div class="a" style="left:1337px;top:1px;width:5px;height:20px;background:#d0d0ce;border-radius:3px;border:1px solid #c0c0be"></div>
 <div class="a" style="left:1338px;top:18px;width:3px;height:2px;background:#1c4a88"></div>
 <div class="tx" style="left:1343px;font-size:13px;color:#1c4a88">0.05 KIB</div>
 <div class="a" style="left:1400px;top:2px;width:40px;height:18px;border:1px solid #1a1a2a;background:linear-gradient(#6b5cc0,#54459a 60%,#5b80e0 60%)"></div>
 <div class="a" style="left:1441px;top:2px;width:40px;height:18px;border:1px solid #1a1a2a;background:linear-gradient(#6655bb,#3e2f78)"></div>
 <svg class="a" style="left:1442px;top:3px" width="38" height="16"><path d="M1,16V13M2,16V12M3,16V12M6,16V13M19,16V11M22,16V9M24,16V3M25,16V11M27,16V10M29,16V12" stroke="#20b8f0" stroke-width="1"/></svg>
 <div class="a" style="left:1484px;top:1px;width:71px;height:20px;background:#8e8e8e"></div>
 <div class="a" style="left:1484px;top:1px;width:32px;height:20px;background:#000"></div>
 <div class="a" style="left:1486px;top:2px;width:6px;height:17px;background:linear-gradient(90deg,#a8a8a8,#d0d0d0)"></div>
 <div class="a" style="left:1494px;top:2px;width:6px;height:17px;background:linear-gradient(90deg,#a8a8a8,#d0d0d0)"></div>
 <div class="a" style="left:1502px;top:2px;width:6px;height:17px;background:linear-gradient(90deg,#a8a8a8,#d0d0d0)"></div>
 <div class="a" style="left:1510px;top:2px;width:5px;height:17px;background:linear-gradient(90deg,#a8a8a8,#d0d0d0)"></div>
 <div class="a" style="left:1486px;top:17px;width:6px;height:2px;background:#4a3ad0"></div>
 <div class="a" style="left:1494px;top:15px;width:6px;height:4px;background:#4a3ad0"></div>
 <div class="a" style="left:1502px;top:17px;width:6px;height:2px;background:#4a3ad0"></div>
 <div class="a" style="left:1510px;top:16px;width:5px;height:3px;background:#4a3ad0"></div>
 <div class="a" style="left:1516px;top:19px;width:39px;height:2px;background:#5a48e0"></div>
 <svg class="a" style="left:1516px;top:14px" width="39" height="6"><path d="M30,6V1M34,6V2M35,6V4" stroke="#5a48e0"/></svg>
 <svg class="a" style="left:1557px;top:4px" width="17" height="15" viewBox="0 0 17 15"><path d="M0.5,5H3.5L7.5,1V14L3.5,10H0.5Z" fill="#333"/><path d="M9.5,4.5Q11,7.5 9.5,10.5M11.5,3Q14,7.5 11.5,12M13.5,1.5Q17,7.5 13.5,13.5" stroke="#333" stroke-width="1.4" fill="none"/></svg>
 <div class="a" style="left:1578px;top:1px;width:38px;height:20px;background:#dcdcdc;border:1.5px solid #000"></div>
 <svg class="a" style="left:1588px;top:3px" width="17" height="17" viewBox="0 0 34 34"><use href="#xss"/></svg>
 <div class="a" style="left:1616px;top:1px;width:38px;height:20px;background:#9a9a9a"></div>
 <div class="a" style="left:1621px;top:3px;width:24px;height:15px;background:#dcdcdc;border:1.5px solid #000"></div>
 <div class="a" style="left:1654px;top:1px;width:37px;height:20px;background:#6464dc"></div>
 <div class="a" style="left:1657px;top:3px;width:15px;height:10px;background:#fff"></div>
 <div class="a" style="left:1672px;top:2px;width:18px;height:11px;background:#ccccf8;border:1px solid #fff"></div>
 <div class="a" style="left:1672px;top:15px;width:7px;height:4px;background:#ccccf8;border:1px solid #fff"></div>
 <div class="a" style="left:1679px;top:13px;width:11px;height:7px;background:#ccccf8;border:1px solid #fff"></div>
 <div class="a" style="left:1691px;top:1px;width:42px;height:20px;background:#9a9a9a"></div>
 <div class="a" style="left:1733px;top:1px;width:81px;height:20px;background:#dcdcdc;border:1.5px solid #000"></div>
 <svg class="a" style="left:1737px;top:3px" width="76" height="17" viewBox="0 0 76 17">
  <rect x="1" y="2.5" width="10" height="13" rx="1" fill="#dca064" stroke="#b0783a" stroke-width="0.6"/><rect x="3.5" y="1" width="5" height="3" rx="1" fill="#ddd" stroke="#888" stroke-width="0.5"/><rect x="6" y="7" width="8" height="9" fill="#f2f2f2" stroke="#aaa" stroke-width="0.5"/><path d="M7.5,10H12.5M7.5,12H12.5" stroke="#999" stroke-width="0.6"/>
  <path d="M19.5,6 Q24,2.5 28,3.5 Q32,2.5 36.5,6 L37.5,13.5 Q34,16 32,15 L31,13.5 Q28,14.3 25,13.5 L24,15 Q22,16 18.5,13.5Z" fill="#fff" stroke="#b8b8b8" stroke-width="1"/><circle cx="24.8" cy="9.8" r="1.3" fill="#aaa"/><circle cx="31.2" cy="9.8" r="1.3" fill="#aaa"/><circle cx="36.5" cy="3" r="2.4" fill="#6b8ae8"/>
  <rect x="47" y="1.5" width="9" height="6.5" fill="#3d6bb8" stroke="#889" stroke-width="0.5"/><rect x="40" y="6" width="9" height="6.5" fill="#4a78c4" stroke="#889" stroke-width="0.5"/><path d="M44.5,12.5V14.5M42,15H47M51.5,8V10M49,10.5H54" stroke="#aaa" stroke-width="1"/>
  <circle cx="63" cy="6.5" r="4.6" fill="#f2604c"/><circle cx="62" cy="5.5" r="1.8" fill="#f8a090"/><rect x="61" y="11" width="4" height="4.5" fill="#c8c070"/><path d="M67.5,8 Q71,5.5 72.5,8.5 Q72,12 68,11.5" fill="#eee" stroke="#c0c0c0" stroke-width="0.7"/>
 </svg>
 <div class="a" style="left:1818px;top:1px;width:6px;height:20px;background:#8a8af8;border:1px solid #3a3a8a;border-radius:3px"></div>
 <div class="tx" style="left:1827px;color:#111">21:00:16 void</div>
</div>

<!-- ===== Screensaver window ===== -->
<div class="a" style="left:159px;top:133px;width:794px;height:547px;box-shadow:0 3px 12px 2px rgba(10,10,40,0.38)"></div>
<div class="a" style="left:159px;top:133px;width:794px;height:547px;background:#dcdcdc;border:1px solid #000"></div>
<div class="a" style="left:160px;top:134px;width:792px;height:1px;background:#fff"></div>
<div class="a" style="left:160px;top:134px;width:1px;height:545px;background:#fff"></div>
<div class="a" style="left:951px;top:134px;width:1px;height:545px;background:#b0b0b0"></div>
<div class="a" style="left:160px;top:678px;width:792px;height:1px;background:#b0b0b0"></div>
<!-- collapse button -->
<div class="a" style="left:163px;top:137px;width:17px;height:17px;background:#fff"></div>
<div class="a" style="left:163px;top:137px;width:16px;height:16px;border:1px solid #333;background:linear-gradient(135deg,#a8a8a8,#f0f0f0)"></div>
<div class="a" style="left:168px;top:142px;width:6px;height:1px;background:#333"></div>
<svg class="a" style="left:167px;top:144px" width="8" height="5"><path d="M0,0H8L4,4Z" fill="#222"/></svg>
<!-- stripes -->
<div class="a" style="left:184px;top:137px;width:134px;height:17px;background:repeating-linear-gradient(#fff 0 1px,#8c8c8c 1px 2px)"></div>
<div class="a" style="left:739px;top:137px;width:131px;height:17px;background:repeating-linear-gradient(#fff 0 1px,#8c8c8c 1px 2px)"></div>
<div class="a" style="left:889px;top:137px;width:3px;height:17px;background:repeating-linear-gradient(#fff 0 1px,#8c8c8c 1px 2px)"></div>
<div class="a t b" style="left:321px;top:137px;font-size:14px;line-height:17px;letter-spacing:0.25px">Screensaver Preferences&nbsp; (XScreenSaver 5.40, 12-Aug-2018)</div>
<!-- title buttons -->
<div class="a" style="left:873px;top:138px;width:15px;height:15px;border:1px solid #333;background:linear-gradient(135deg,#a8a8a8,#f0f0f0);box-shadow:1px 1px 0 #fff"></div>
<div class="a" style="left:874px;top:144px;width:13px;height:2px;border-top:1px solid #333;border-bottom:1px solid #333;background:#fff"></div>
<div class="a" style="left:893px;top:138px;width:15px;height:15px;border:1px solid #333;background:linear-gradient(135deg,#a8a8a8,#f0f0f0);box-shadow:1px 1px 0 #fff"></div>
<div class="a" style="left:894px;top:148px;width:13px;height:1px;background:#333"></div>
<div class="a" style="left:913px;top:138px;width:15px;height:15px;border:1px solid #333;background:linear-gradient(135deg,#a8a8a8,#f0f0f0);box-shadow:1px 1px 0 #fff"></div>
<div class="a" style="left:914px;top:139px;width:7px;height:7px;border-right:1px solid #333;border-bottom:1px solid #333"></div>
<div class="a" style="left:933px;top:138px;width:15px;height:15px;border:1px solid #333;background:linear-gradient(135deg,#a8a8a8,#f0f0f0);box-shadow:1px 1px 0 #fff"></div>
<!-- content -->
<div class="a" style="left:164px;top:158px;width:784px;height:517px;border:1px solid #000;background:#dedede"></div>
<div class="a" style="left:165px;top:159px;width:782px;height:1px;background:#fff"></div>
<div class="a" style="left:165px;top:159px;width:1px;height:515px;background:#fff"></div>
<div class="a" style="left:948px;top:158px;width:1px;height:518px;background:#fff"></div>
<div class="a" style="left:164px;top:675px;width:785px;height:1px;background:#fff"></div>
<!-- menubar -->
<div class="a t b" style="left:175px;top:165px;font-size:14px;line-height:16px"><u>F</u>ile</div>
<div class="a t b" style="left:213px;top:165px;font-size:14px;line-height:16px"><u>H</u>elp</div>
<!-- notebook page -->
<div class="a" style="left:173px;top:224px;width:766px;height:442px;border:1px solid #555;border-right-color:#333;border-bottom-color:#333;background:linear-gradient(#f3f3f3,#ebebeb)"></div>
<div class="a" style="left:174px;top:225px;width:1px;height:440px;background:#fff"></div>
<div class="a" style="left:931px;top:225px;width:7px;height:440px;background:linear-gradient(90deg,rgba(0,0,0,0),rgba(0,0,0,0.18))"></div>
<div class="a" style="left:174px;top:657px;width:764px;height:8px;background:linear-gradient(rgba(0,0,0,0),rgba(0,0,0,0.15))"></div>
<!-- tabs -->
<svg class="a" style="left:170px;top:198px" width="192" height="28">
 <path d="M187.5,26.5 C185,12 182,3.5 174,2.5 L126,2.5 C118,3.5 114,10 110,26.5" fill="#bdbdbd" stroke="#333" stroke-width="1"/>
 <path d="M3.5,28 C6,12 9,3.5 18,2.5 L97,2.5 C105,3.5 107,12 110,28" fill="#f3f3f3" stroke="#333" stroke-width="1"/>
 <path d="M4,27 H109" stroke="#e8e8e8" stroke-width="1"/>
</svg>
<div class="a t b" style="left:180px;top:205px;font-size:13.2px;line-height:16px"><u>D</u>isplay Modes</div>
<div class="a t b" style="left:286px;top:205px;font-size:13.2px;line-height:16px"><u>A</u>dvanced</div>
<!-- Mode -->
<div class="a t b" style="left:196px;top:260px;font-size:13.75px;line-height:16px"><u>M</u>ode:</div>
<div class="a" style="left:240px;top:254px;width:207px;height:26px;border:1px solid #111;border-radius:4px;background:linear-gradient(#f4f4f4,#dcdcdc);box-shadow:inset -1px -1px 0 #999"></div>
<div class="a" style="left:428px;top:256px;width:1px;height:21px;background:#bbb"></div>
<svg class="a" style="left:432px;top:261px" width="12" height="11"><path d="M0,0H11L5.5,10Z" fill="#111"/></svg>
<div class="a t b" style="left:247px;top:260px;font-size:13.75px;line-height:16px"><u>R</u>andom Screen Saver</div>
<!-- list -->
<div class="a" style="left:196px;top:290px;width:254px;height:226px;border:1px solid #777;border-bottom:none;background:#fff;overflow:hidden">
 <div class="a" style="left:0;top:6px;width:238px;height:1px;background:#999"></div>
 <div class="a" style="left:0;top:137px;width:238px;height:26px;background:#9999f8"></div>
 <div class="a" style="left:0;top:32px;width:238px;height:1px;background:#999"></div>
 <div class="a" style="left:0;top:58px;width:238px;height:1px;background:#999"></div>
 <div class="a" style="left:0;top:84px;width:238px;height:1px;background:#999"></div>
 <div class="a" style="left:0;top:110px;width:238px;height:1px;background:#999"></div>
 <div class="a" style="left:0;top:136px;width:238px;height:1px;background:#999"></div>
 <div class="a" style="left:0;top:162px;width:238px;height:1px;background:#999"></div>
 <div class="a" style="left:0;top:188px;width:238px;height:1px;background:#999"></div>
 <div class="a" style="left:0;top:214px;width:238px;height:1px;background:#999"></div>
 <div class="a" style="left:5px;top:14px;width:13px;height:13px;border:1.5px solid #111;background:linear-gradient(135deg,#fff,#ddd)"></div><div class="a t b" style="left:26px;top:13px;font-size:13.75px;line-height:16px;color:#000">NoseGuy</div><div class="a" style="left:5px;top:40px;width:13px;height:13px;border:1.5px solid #111;background:linear-gradient(135deg,#fff,#ddd)"></div><svg class="a" style="left:6px;top:41px" width="11" height="11"><path d="M1.5,5 L4.5,8.5 L10,2" stroke="#111" stroke-width="1.4" fill="none"/></svg><div class="a t b" style="left:26px;top:39px;font-size:13.75px;line-height:16px;color:#000">Pacman</div><div class="a" style="left:5px;top:66px;width:13px;height:13px;border:1.5px solid #111;background:linear-gradient(135deg,#fff,#ddd)"></div><svg class="a" style="left:6px;top:67px" width="11" height="11"><path d="M1.5,5 L4.5,8.5 L10,2" stroke="#111" stroke-width="1.4" fill="none"/></svg><div class="a t b" style="left:26px;top:65px;font-size:13.75px;line-height:16px;color:#000">Pedal</div><div class="a" style="left:5px;top:92px;width:13px;height:13px;border:1.5px solid #111;background:linear-gradient(135deg,#fff,#ddd)"></div><svg class="a" style="left:6px;top:93px" width="11" height="11"><path d="M1.5,5 L4.5,8.5 L10,2" stroke="#111" stroke-width="1.4" fill="none"/></svg><div class="a t b" style="left:26px;top:91px;font-size:13.75px;line-height:16px;color:#888">Peepers</div><div class="a" style="left:5px;top:118px;width:13px;height:13px;border:1.5px solid #111;background:linear-gradient(135deg,#fff,#ddd)"></div><svg class="a" style="left:6px;top:119px" width="11" height="11"><path d="M1.5,5 L4.5,8.5 L10,2" stroke="#111" stroke-width="1.4" fill="none"/></svg><div class="a t b" style="left:26px;top:117px;font-size:13.75px;line-height:16px;color:#000">Penetrate</div><div class="a" style="left:5px;top:144px;width:13px;height:13px;border:1.5px solid #111;background:linear-gradient(135deg,#fff,#ddd)"></div><svg class="a" style="left:6px;top:145px" width="11" height="11"><path d="M1.5,5 L4.5,8.5 L10,2" stroke="#111" stroke-width="1.4" fill="none"/></svg><div class="a t b" style="left:26px;top:143px;font-size:13.75px;line-height:16px;color:#000">Penrose</div><div class="a" style="left:5px;top:170px;width:13px;height:13px;border:1.5px solid #111;background:linear-gradient(135deg,#fff,#ddd)"></div><svg class="a" style="left:6px;top:171px" width="11" height="11"><path d="M1.5,5 L4.5,8.5 L10,2" stroke="#111" stroke-width="1.4" fill="none"/></svg><div class="a t b" style="left:26px;top:169px;font-size:13.75px;line-height:16px;color:#000">Petri</div><div class="a" style="left:5px;top:196px;width:13px;height:13px;border:1.5px solid #111;background:linear-gradient(135deg,#fff,#ddd)"></div><svg class="a" style="left:6px;top:197px" width="11" height="11"><path d="M1.5,5 L4.5,8.5 L10,2" stroke="#111" stroke-width="1.4" fill="none"/></svg><div class="a t b" style="left:26px;top:195px;font-size:13.75px;line-height:16px;color:#000">Phosphor</div><div class="a" style="left:5px;top:222px;width:13px;height:13px;border:1.5px solid #111;background:linear-gradient(135deg,#fff,#ddd)"></div><svg class="a" style="left:6px;top:223px" width="11" height="11"><path d="M1.5,5 L4.5,8.5 L10,2" stroke="#111" stroke-width="1.4" fill="none"/></svg><div class="a t b" style="left:26px;top:221px;font-size:13.75px;line-height:16px;color:#888">Photopile</div>
</div>
<!-- scrollbar -->
<div class="a" style="left:434px;top:291px;width:16px;height:225px;border:1px solid #111;background:#a9a9a9"></div>
<div class="a" style="left:435px;top:392px;width:14px;height:36px;background:#9999f8;border-top:1px solid #333;border-bottom:1px solid #333"></div>
<div class="a" style="left:438px;top:405px;width:8px;height:9px;background:repeating-linear-gradient(#333 0 1px,transparent 1px 2px)"></div>
<div class="a" style="left:435px;top:484px;width:14px;height:16px;background:linear-gradient(#fff,#d8d8d8);border-top:1px solid #222;border-bottom:1px solid #222"></div>
<svg class="a" style="left:437px;top:488px" width="10" height="7"><path d="M0,6H10L5,0Z" fill="#111"/></svg>
<div class="a" style="left:435px;top:500px;width:14px;height:15px;background:linear-gradient(#fff,#d8d8d8);border-top:1px solid #222"></div>
<svg class="a" style="left:437px;top:504px" width="10" height="7"><path d="M0,0H10L5,6Z" fill="#111"/></svg>
<!-- up/down buttons -->
<div class="a" style="left:302px;top:517px;width:21px;height:21px;border:1px solid #222;border-radius:4px;background:linear-gradient(#f2f2f2,#d4d4d4)"></div>
<svg class="a" style="left:307px;top:522px" width="12" height="10"><path d="M0,0H11L5.5,9Z" fill="#111"/></svg>
<div class="a" style="left:323px;top:517px;width:21px;height:21px;border:1px solid #222;border-radius:4px;background:linear-gradient(#f2f2f2,#d4d4d4)"></div>
<svg class="a" style="left:328px;top:521px" width="12" height="10"><path d="M0,9H11L5.5,0Z" fill="#111"/></svg>
<!-- blank/cycle/lock -->
<div class="a t b" style="left:257px;top:555px;font-size:13.75px;line-height:16px"><u>B</u>lank After</div>
<div class="a t b" style="left:258px;top:585px;font-size:13.75px;line-height:16px"><u>C</u>ycle After</div>
<div class="a" style="left:186px;top:619px;width:148px;height:26px;background:#dddddd"></div>
<div class="a" style="left:190px;top:625px;width:13px;height:13px;border:1.5px solid #111;background:linear-gradient(135deg,#fff,#d0d0d0)"></div>
<svg class="a" style="left:191px;top:626px" width="11" height="11"><path d="M1.5,5 L4.5,8.5 L10,2" stroke="#111" stroke-width="1.5" fill="none"/></svg>
<div class="a t b" style="left:213px;top:624px;font-size:13.75px;line-height:16px"><u>L</u>ock Screen After</div>
<div class="a" style="left:338px;top:549px;width:41px;height:26px;border:1px solid #111;background:#fff"></div><div class="a t b" style="left:344px;top:555px;font-size:13.75px;line-height:16px">10</div><div class="a" style="left:378px;top:549px;width:13px;height:26px;border:1px solid #222;border-radius:3px;background:linear-gradient(#eee,#cfcfcf)"></div><svg class="a" style="left:380px;top:552px" width="9" height="20"><path d="M0.5,5H8.5L4.5,0.5Z M0.5,14H8.5L4.5,18.5Z" fill="#111"/></svg><div class="a t b" style="left:400px;top:555px;font-size:13.75px;line-height:16px">minutes</div><div class="a" style="left:338px;top:579px;width:41px;height:26px;border:1px solid #111;background:#fff"></div><div class="a t b" style="left:344px;top:585px;font-size:13.75px;line-height:16px">10</div><div class="a" style="left:378px;top:579px;width:13px;height:26px;border:1px solid #222;border-radius:3px;background:linear-gradient(#eee,#cfcfcf)"></div><svg class="a" style="left:380px;top:582px" width="9" height="20"><path d="M0.5,5H8.5L4.5,0.5Z M0.5,14H8.5L4.5,18.5Z" fill="#111"/></svg><div class="a t b" style="left:400px;top:585px;font-size:13.75px;line-height:16px">minutes</div><div class="a" style="left:338px;top:619px;width:41px;height:26px;border:1px solid #111;background:#fff"></div><div class="a t b" style="left:344px;top:625px;font-size:13.75px;line-height:16px">30</div><div class="a" style="left:378px;top:619px;width:13px;height:26px;border:1px solid #222;border-radius:3px;background:linear-gradient(#eee,#cfcfcf)"></div><svg class="a" style="left:380px;top:622px" width="9" height="20"><path d="M0.5,5H8.5L4.5,0.5Z M0.5,14H8.5L4.5,18.5Z" fill="#111"/></svg><div class="a t b" style="left:400px;top:625px;font-size:13.75px;line-height:16px">minutes</div>
<!-- Penrose frame -->
<div class="a" style="left:462px;top:249px;width:463px;height:292px;border:1px solid #aaa;box-shadow:1px 1px 0 #fff, inset 1px 1px 0 #fff"></div>
<div class="a t b" style="left:463px;top:241px;font-size:13.75px;line-height:16px;background:#f3f3f3;padding:0 2px">Penrose</div>
<div class="a" style="left:516px;top:266px;width:353px;height:266px;background:#a09a4a;overflow:hidden" id="penrose"><svg width="353" height="266" viewBox="0 0 353 266" style="position:absolute;left:0;top:0"><rect width="353" height="266" fill="#a39b4b"/><g stroke="#000" stroke-width="1.1" stroke-linejoin="round"><path d="M3.7,1.8 L36.1,25.3 L23.7,-12.7 L-8.6,-36.3 Z" fill="#98f0dc"/><path d="M3.7,1.8 L36.1,25.3 L3.7,48.8 L-28.6,25.3 Z" fill="#a39b4b"/><path d="M36.1,25.3 L76.1,25.3 L63.7,-12.7 L23.7,-12.7 Z" fill="#a39b4b"/><path d="M76.1,25.3 L108.5,1.8 L96.1,-36.3 L63.7,-12.7 Z" fill="#a39b4b"/><path d="M36.1,25.3 L76.1,25.3 L63.7,63.3 L23.7,63.3 Z" fill="#a39b4b"/><path d="M76.1,25.3 L108.5,48.8 L96.1,86.9 L63.7,63.3 Z" fill="#a39b4b"/><path d="M76.1,25.3 L108.5,1.8 L140.8,25.3 L108.5,48.8 Z" fill="#a39b4b"/><path d="M108.5,1.8 L148.5,1.8 L180.8,25.3 L140.8,25.3 Z" fill="#98f0dc"/><path d="M140.8,25.3 L180.8,25.3 L148.5,48.8 L108.5,48.8 Z" fill="#98f0dc"/><path d="M148.5,48.8 L180.8,25.3 L193.2,63.3 L160.8,86.9 Z" fill="#a39b4b"/><path d="M108.5,48.8 L148.5,48.8 L160.8,86.9 L120.8,86.9 Z" fill="#a39b4b"/><path d="M108.5,48.8 L120.8,86.9 L108.5,124.9 L96.1,86.9 Z" fill="#98f0dc"/><path d="M63.7,63.3 L96.1,86.9 L108.5,124.9 L76.1,101.4 Z" fill="#98f0dc"/><path d="M120.8,86.9 L160.8,86.9 L148.5,124.9 L108.5,124.9 Z" fill="#f01ca0"/><path d="M63.7,63.3 L76.1,101.4 L43.7,124.9 L31.4,86.9 Z" fill="#a39b4b"/><path d="M23.7,63.3 L63.7,63.3 L31.4,86.9 L-8.6,86.9 Z" fill="#98f0dc"/><path d="M36.1,25.3 L23.7,63.3 L-8.6,86.9 L3.7,48.8 Z" fill="#98f0dc"/><path d="M-8.6,86.9 L31.4,86.9 L43.7,124.9 L3.7,124.9 Z" fill="#a39b4b"/><path d="M76.1,101.4 L108.5,124.9 L76.1,148.4 L43.7,124.9 Z" fill="#521c78"/><path d="M160.8,86.9 L148.5,124.9 L180.8,101.4 L193.2,63.3 Z" fill="#3e6c30"/><path d="M213.2,1.8 L253.2,1.8 L220.8,25.3 L180.8,25.3 Z" fill="#a818c8"/><path d="M148.5,1.8 L180.8,25.3 L213.2,1.8 L180.8,-21.7 Z" fill="#a39b4b"/><path d="M220.8,25.3 L233.2,63.3 L265.5,39.8 L253.2,1.8 Z" fill="#b43a70"/><path d="M180.8,25.3 L220.8,25.3 L233.2,63.3 L193.2,63.3 Z" fill="#a39b4b"/><path d="M253.2,1.8 L285.5,25.3 L297.9,63.3 L265.5,39.8 Z" fill="#a818c8"/><path d="M253.2,1.8 L285.5,25.3 L297.9,-12.7 L265.5,-36.3 Z" fill="#b43a70"/><path d="M297.9,63.3 L285.5,25.3 L297.9,-12.7 L310.3,25.3 Z" fill="#a818c8"/><path d="M310.3,25.3 L350.3,25.3 L337.9,63.3 L297.9,63.3 Z" fill="#b43a70"/><path d="M310.3,25.3 L350.3,25.3 L337.9,-12.7 L297.9,-12.7 Z" fill="#b43a70"/><path d="M233.2,63.3 L265.5,86.9 L297.9,63.3 L265.5,39.8 Z" fill="#b43a70"/><path d="M193.2,63.3 L233.2,63.3 L265.5,86.9 L225.5,86.9 Z" fill="#98f0dc"/><path d="M297.9,63.3 L337.9,63.3 L370.3,86.9 L330.3,86.9 Z" fill="#a818c8"/><path d="M297.9,63.3 L330.3,86.9 L342.6,124.9 L310.3,101.4 Z" fill="#a818c8"/><path d="M265.5,86.9 L297.9,63.3 L310.3,101.4 L277.9,124.9 Z" fill="#b43a70"/><path d="M310.3,101.4 L342.6,124.9 L310.3,148.4 L277.9,124.9 Z" fill="#b43a70"/><path d="M350.3,25.3 L382.6,48.8 L370.3,86.9 L337.9,63.3 Z" fill="#b43a70"/><path d="M225.5,86.9 L265.5,86.9 L253.2,124.9 L213.2,124.9 Z" fill="#a39b4b"/><path d="M265.5,86.9 L277.9,124.9 L265.5,162.9 L253.2,124.9 Z" fill="#98f0dc"/><path d="M180.8,101.4 L193.2,63.3 L225.5,86.9 L213.2,124.9 Z" fill="#f01ca0"/><path d="M148.5,124.9 L180.8,101.4 L213.2,124.9 L180.8,148.4 Z" fill="#f01ca0"/><path d="M36.1,148.4 L3.7,124.9 L-8.6,162.9 L23.7,186.4 Z" fill="#521c78"/><path d="M3.7,124.9 L43.7,124.9 L76.1,148.4 L36.1,148.4 Z" fill="#98f0dc"/><path d="M36.1,148.4 L76.1,148.4 L63.7,186.4 L23.7,186.4 Z" fill="#521c78"/><path d="M76.1,148.4 L88.5,186.4 L76.1,224.5 L63.7,186.4 Z" fill="#98f0dc"/><path d="M76.1,148.4 L108.5,124.9 L120.8,162.9 L88.5,186.4 Z" fill="#2d58b0"/><path d="M108.5,124.9 L148.5,124.9 L160.8,162.9 L120.8,162.9 Z" fill="#0f5650"/><path d="M148.5,124.9 L180.8,148.4 L193.2,186.4 L160.8,162.9 Z" fill="#3e6c30"/><path d="M88.5,186.4 L120.8,162.9 L108.5,201.0 L76.1,224.5 Z" fill="#18c83c"/><path d="M120.8,162.9 L160.8,162.9 L193.2,186.4 L153.2,186.4 Z" fill="#18c83c"/><path d="M120.8,162.9 L153.2,186.4 L140.8,224.5 L108.5,201.0 Z" fill="#0f5650"/><path d="M153.2,186.4 L193.2,186.4 L180.8,224.5 L140.8,224.5 Z" fill="#0f5650"/><path d="M76.1,224.5 L108.5,248.0 L140.8,224.5 L108.5,201.0 Z" fill="#0f5650"/><path d="M108.5,248.0 L148.5,248.0 L180.8,224.5 L140.8,224.5 Z" fill="#98f0dc"/><path d="M36.1,224.5 L76.1,224.5 L43.7,248.0 L3.7,248.0 Z" fill="#98f0dc"/><path d="M76.1,224.5 L63.7,262.5 L31.4,286.0 L43.7,248.0 Z" fill="#98f0dc"/><path d="M23.7,186.4 L36.1,224.5 L3.7,248.0 L-8.6,210.0 Z" fill="#a39b4b"/><path d="M23.7,186.4 L-8.6,162.9 L-41.0,186.4 L-8.6,210.0 Z" fill="#a39b4b"/><path d="M76.1,224.5 L108.5,248.0 L96.1,286.0 L63.7,262.5 Z" fill="#a39b4b"/><path d="M148.5,248.0 L180.8,224.5 L193.2,262.5 L160.8,286.0 Z" fill="#a39b4b"/><path d="M108.5,248.0 L148.5,248.0 L160.8,286.0 L120.8,286.0 Z" fill="#a39b4b"/><path d="M108.5,248.0 L120.8,286.0 L108.5,324.1 L96.1,286.0 Z" fill="#98f0dc"/><path d="M3.7,248.0 L43.7,248.0 L31.4,286.0 L-8.6,286.0 Z" fill="#a39b4b"/><path d="M23.7,186.4 L63.7,186.4 L76.1,224.5 L36.1,224.5 Z" fill="#521c78"/><path d="M180.8,148.4 L213.2,124.9 L225.5,162.9 L193.2,186.4 Z" fill="#f01ca0"/><path d="M193.2,186.4 L233.2,186.4 L265.5,162.9 L225.5,162.9 Z" fill="#98f0dc"/><path d="M193.2,186.4 L233.2,186.4 L265.5,210.0 L225.5,210.0 Z" fill="#98f0dc"/><path d="M265.5,162.9 L297.9,186.4 L310.3,148.4 L277.9,124.9 Z" fill="#a39b4b"/><path d="M310.3,148.4 L342.6,124.9 L330.3,162.9 L297.9,186.4 Z" fill="#a818c8"/><path d="M297.9,186.4 L330.3,162.9 L370.3,162.9 L337.9,186.4 Z" fill="#a818c8"/><path d="M342.6,124.9 L382.6,124.9 L370.3,162.9 L330.3,162.9 Z" fill="#b43a70"/><path d="M337.9,186.4 L370.3,162.9 L382.6,201.0 L350.3,224.5 Z" fill="#b43a70"/><path d="M233.2,186.4 L265.5,162.9 L297.9,186.4 L265.5,210.0 Z" fill="#a39b4b"/><path d="M297.9,186.4 L337.9,186.4 L350.3,224.5 L310.3,224.5 Z" fill="#a39b4b"/><path d="M225.5,210.0 L265.5,210.0 L253.2,248.0 L213.2,248.0 Z" fill="#a39b4b"/><path d="M193.2,186.4 L225.5,210.0 L213.2,248.0 L180.8,224.5 Z" fill="#a39b4b"/><path d="M265.5,210.0 L277.9,248.0 L265.5,286.0 L253.2,248.0 Z" fill="#98f0dc"/><path d="M265.5,210.0 L297.9,186.4 L310.3,224.5 L277.9,248.0 Z" fill="#a39b4b"/><path d="M310.3,224.5 L350.3,224.5 L382.6,248.0 L342.6,248.0 Z" fill="#98f0dc"/><path d="M277.9,248.0 L310.3,224.5 L297.9,262.5 L265.5,286.0 Z" fill="#98f0dc"/><path d="M310.3,224.5 L342.6,248.0 L330.3,286.0 L297.9,262.5 Z" fill="#a39b4b"/><path d="M180.8,224.5 L213.2,248.0 L225.5,286.0 L193.2,262.5 Z" fill="#98f0dc"/><path d="M213.2,248.0 L253.2,248.0 L265.5,286.0 L225.5,286.0 Z" fill="#a39b4b"/><path d="M330.3,86.9 L370.3,86.9 L382.6,124.9 L342.6,124.9 Z" fill="#b43a70"/><path d="M350.3,25.3 L382.6,48.8 L370.3,10.8 L337.9,-12.7 Z" fill="#b43a70"/></g></svg></div>
<!-- buttons -->
<div class="a" style="left:558px;top:587px;width:87px;height:30px;border:1px solid #111;border-radius:4px;background:linear-gradient(#f4f4f4,#dadada);box-shadow:inset -1px -1px 0 #aaa"></div>
<div class="a t b" style="left:574px;top:595px;font-size:13.75px;line-height:16px"><u>P</u>review</div>
<div class="a" style="left:742px;top:587px;width:87px;height:30px;border:1px solid #111;border-radius:4px;background:linear-gradient(#f4f4f4,#dadada);box-shadow:inset -1px -1px 0 #aaa"></div>
<div class="a t b" style="left:751px;top:595px;font-size:13.75px;line-height:16px"><u>S</u>ettings...</div>

</body></html>
